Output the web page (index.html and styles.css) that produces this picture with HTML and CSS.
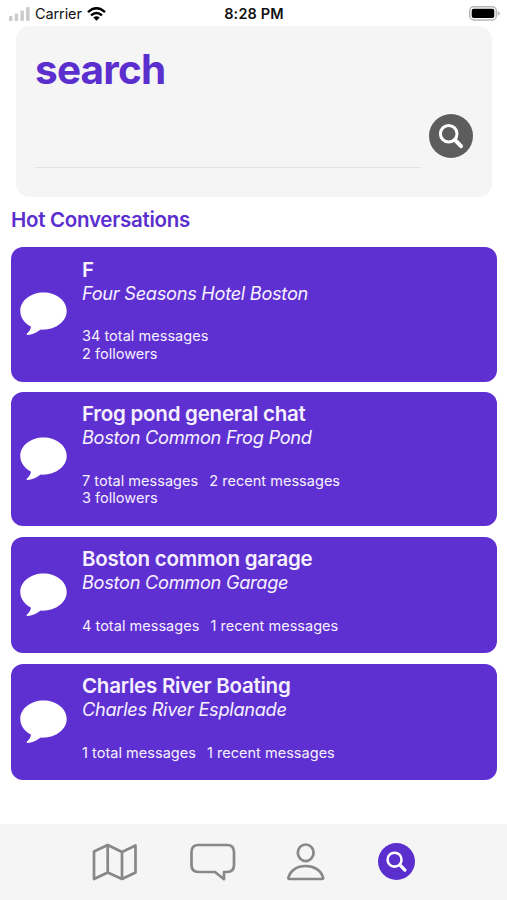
FILE: index.html
```html
<!DOCTYPE html>
<html lang="en">
<head>
<meta charset="utf-8">
<meta name="viewport" content="width=device-width, initial-scale=1">
<title>Search</title>
<link rel="stylesheet" href="styles.css">
</head>
<body>
<svg width="0" height="0" class="defs">
  <symbol id="bubble" viewBox="0 0 47 44"><path d="M23.500 0.500C10.500 0.500 0.300 8.700 0.300 19c0 6.700 4.200 12.300 10.700 15.700-.5 3.300-2.300 5.300-4 6.800-.8.900-.2 1.700 1 1.500 5.200-.5 9.500-3 12.700-5.400 15 .7 26-8.200 26-18.600C46.700 8.700 36.500.5 23.500.5z" fill="#fff"/></symbol>
  <symbol id="lens" viewBox="0 0 44 44"><circle cx="22" cy="22" r="22" fill="currentColor" stroke="none"/><g fill="none" stroke="#fff" stroke-linecap="round"><circle cx="19.700" cy="19.800" r="8.300" stroke-width="3"/><path d="M26 26l6 6.200" stroke-width="4"/></g></symbol>
</svg>
<header class="status">
  <div class="carrier">
    <svg width="21" height="14" viewBox="0 0 21 14" fill="#cbcbcb"><rect y="9" width="3.500" height="5" rx="1"/><rect x="5.700" y="6.500" width="3.500" height="7.500" rx="1"/><rect x="11.400" y="3.500" width="3.500" height="10.500" rx="1"/><rect x="17.100" width="3.500" height="14" rx="1"/></svg>
    <span>Carrier</span>
    <svg class="wifi" width="19" height="14" viewBox="0 0 19 14"><g fill="none" stroke="#000" stroke-width="2.500"><path d="M1 5.100Q9.500-2.500 18 5.100"/><path d="M4 8.400Q9.500 3.500 15 8.400"/></g><path d="M6.300 10.500Q9.500 7.900 12.700 10.500L9.500 13.800z"/></svg>
  </div>
  <span class="time">8:28 PM</span>
  <svg class="battery" width="31" height="15" viewBox="0 0 31 15"><rect x=".7" y=".7" width="26.600" height="13.300" rx="4" fill="#fff" stroke="#b5b5b5" stroke-width="1.400"/><rect x="2.700" y="2.700" width="22.600" height="9.400" rx="2"/><path d="M28.700 5q2 .7 2 2.400t-2 2.400z" fill="#b5b5b5"/></svg>
</header>
<section class="panel">
  <h1>search</h1>
  <div class="field"><div class="line"></div><svg class="go" width="44" height="44"><use href="#lens"/></svg></div>
</section>
<h2>Hot Conversations</h2>
<main class="list">
  <article class="card"><svg class="bubble"><use href="#bubble"/></svg><div><h3>F</h3><p class="place">Four Seasons Hotel Boston</p><p class="meta"><span>34 total messages</span></p><p class="meta">2 followers</p></div></article>
  <article class="card"><svg class="bubble"><use href="#bubble"/></svg><div><h3>Frog pond general chat</h3><p class="place">Boston Common Frog Pond</p><p class="meta"><span>7 total messages</span><span>2 recent messages</span></p><p class="meta">3 followers</p></div></article>
  <article class="card short"><svg class="bubble"><use href="#bubble"/></svg><div><h3>Boston common garage</h3><p class="place">Boston Common Garage</p><p class="meta"><span>4 total messages</span><span>1 recent messages</span></p></div></article>
  <article class="card short"><svg class="bubble"><use href="#bubble"/></svg><div><h3>Charles River Boating</h3><p class="place">Charles River Esplanade</p><p class="meta"><span>1 total messages</span><span>1 recent messages</span></p></div></article>
</main>
<nav class="tabs">
  <svg width="46" height="38" viewBox="0 0 46 38"><path d="M2 8.500L15.700 2 30 9 43.500 2.500V29.500L30 36 15.700 29.500 2 36zM15.700 2V29.500M30 9V36"/></svg>
  <svg width="46" height="38" viewBox="0 0 46 38"><path d="M8.500 2H37q7 0 7 7V22q0 7-7 7H34v7.200L25 29H8.500Q1.500 29 1.500 22V9q0-7 7-7z"/></svg>
  <svg class="person" width="38" height="38" viewBox="4 0 38 38"><ellipse cx="22.700" cy="9.800" rx="7.900" ry="8.300"/><path d="M6.500 36Q5 36 5.500 34.300C7.500 27.500 14 23 22.700 23S38 27.500 40 34.300Q40.500 36 39 36z"/></svg>
  <svg class="active" width="37" height="37" viewBox="0 0 44 44"><use href="#lens"/></svg>
</nav>
</body>
</html>
```
FILE: styles.css
```css
* { box-sizing: border-box; }
body { margin: 0; height: 900px; display: flex; flex-direction: column; background: #fff; font-family: Inter, "Liberation Sans", sans-serif; overflow: hidden; }
h1, h2, h3, p { margin: 0; white-space: nowrap; }
svg { flex: none; display: block; }
.defs { position: absolute; }
.status { height: 26px; flex: none; display: grid; grid-template-columns: 1fr auto 1fr; align-items: center; padding: 1px 7px 0 8px; font-size: 14.5px; color: #111; }
.carrier { display: flex; align-items: center; gap: 5px; padding-left: 1px; }
.carrier span { letter-spacing: -.1px; }
.time { font-weight: 600; letter-spacing: .15px; }
.battery { justify-self: end; }
.panel { flex: none; width: 476px; height: 171px; margin-left: 16px; padding: 19px 19px 0; border-radius: 14px; background: #f5f5f5; }
h1 { font-size: 40.500px; line-height: 50px; font-weight: 700; letter-spacing: -.8px; color: #5b2fce; }
.field { display: flex; align-items: flex-start; gap: 8px; margin-top: 19px; }
.line { width: 386px; height: 54px; border-bottom: 1px solid #e2e2e2; }
.go { color: #5d5d5d; }
h2 { flex: none; margin: 10px 0 0 11px; height: 40px; font-size: 20.5px; line-height: 26px; font-weight: 600; letter-spacing: -.28px; color: #5b2fce; }
.list { display: flex; flex-direction: column; gap: 10.300px; padding: 0 10px 0 11px; }
.card { height: 134.500px; flex: none; display: flex; align-items: center; gap: 15px; padding-left: 9px; border-radius: 12px; background: #5f30d1; color: #f6f0ff; }
.card > div { align-self: flex-start; padding-top: 10.500px; }
.short { height: 116.800px; }
.bubble { width: 47px; height: 44px; }
h3 { font-size: 20.5px; line-height: 24px; font-weight: 600; letter-spacing: -.24px; }
.place { font-size: 18.200px; line-height: 23px; font-style: italic; letter-spacing: -.28px; margin-bottom: 22.500px; }
.meta { display: flex; gap: 11px; font-size: 14.500px; line-height: 17.500px; letter-spacing: .03px; }
.tabs { height: 76px; flex: none; margin-top: auto; display: flex; align-items: flex-start; padding: 19px 0 0 92px; gap: 52px; background: #f5f5f5; fill: none; stroke: #888; stroke-width: 2.700; stroke-linejoin: round; }
.person { margin-left: -1px; }
.active { color: #5b2fce; margin-left: 1px; }
```
